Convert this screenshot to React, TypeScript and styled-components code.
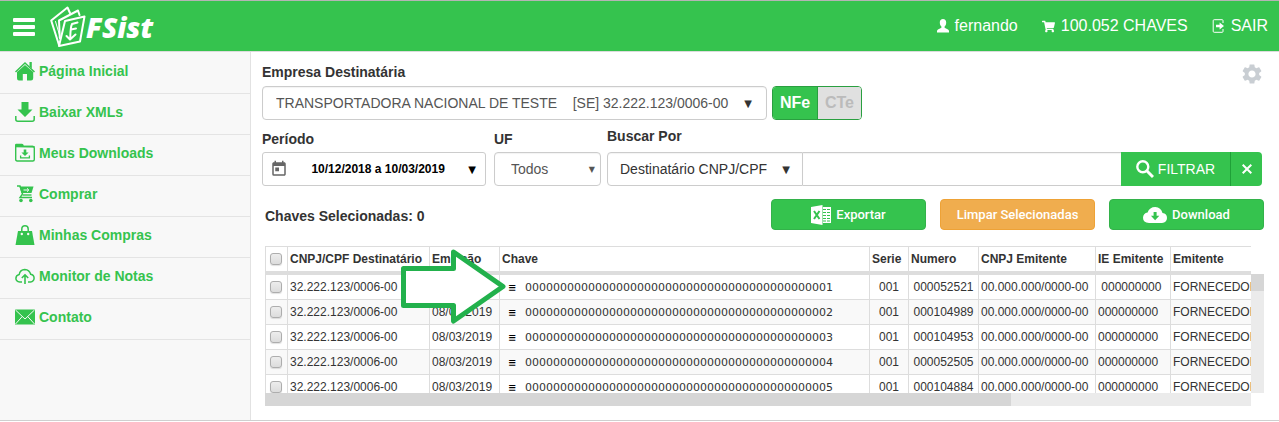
import React from 'react';
import styled, { createGlobalStyle } from 'styled-components';
import { MdSettings, MdToday } from 'react-icons/md';
import { FaShoppingCart } from 'react-icons/fa';

const green = '#35c34e';
const line = '#dddddd';

const GlobalStyle = createGlobalStyle`
  * { box-sizing: border-box; }
  body { margin: 0; background: #fff; }
  body, button, input, select { font-family: "Liberation Sans", Arial, sans-serif; }
  button { cursor: pointer; }
`;

const TopBar = styled.header`
  display: flex;
  align-items: center;
  height: 52px;
  padding: 0 11px 0 13px;
  background: ${green};
  border-top: 1px solid #b4b4b4;
  border-bottom: 1px solid #dcdcdc;
  color: #fff;
`;

const MenuButton = styled.button`
  display: flex;
  flex-direction: column;
  gap: 3px;
  width: 22px;
  padding: 2px 0 0;
  border: 0;
  background: none;
`;

const MenuBar = styled.span`
  height: 4px;
  border-radius: 1px;
  background: #fff;
`;

const Brand = styled.a`
  display: flex;
  align-items: center;
  margin-left: 15px;
  color: #fff;
  text-decoration: none;
  font: italic 800 28px/36px "Open Sans", sans-serif;
`;

const BrandName = styled.span`
  padding-top: 2px;
`;

const UserNav = styled.nav`
  display: flex;
  gap: 24px;
  margin-left: auto;
`;

const UserLink = styled.a`
  display: flex;
  align-items: center;
  gap: 6px;
  color: #fff;
  font-size: 16px;
  line-height: 20px;
  text-decoration: none;
`;

const Body = styled.div`
  display: flex;
  border-bottom: 1px solid #cfcfcf;
`;

const Sidebar = styled.nav`
  flex: none;
  width: 251px;
  padding-top: 1px;
  background: #f8f8f8;
  border-right: 1px solid #e2e2e2;
`;

const SideLink = styled.a`
  display: flex;
  align-items: center;
  gap: 4px;
  height: 41px;
  padding: 0 15px 4px;
  border-bottom: 1px solid #e4e4e4;
  color: ${green};
  font-size: 14px;
  font-weight: bold;
  text-decoration: none;
`;

const Main = styled.main`
  flex: 1;
  min-width: 0;
  padding: 10px 15px 14px 11px;
`;

const Row = styled.div`
  display: flex;
  align-items: flex-end;
`;

const CompanyRow = styled(Row)`
  gap: 5px;
`;

const FilterRow = styled(Row)`
  margin-top: 6px;
  padding-right: 2px;
`;

const Field = styled.div<{ $width?: number; $gap?: number }>`
  display: flex;
  flex-direction: column;
  flex: ${p => (p.$width ? `0 1 ${p.$width}px` : '1 1 0')};
  min-width: 0;
  margin-right: ${p => p.$gap ?? 0}px;
`;

const Label = styled.label<{ $space: number }>`
  color: #333;
  font-size: 14px;
  font-weight: bold;
  line-height: 20px;
  margin-bottom: ${p => p.$space}px;
`;

const SelectBox = styled.div<{ $joined?: boolean }>`
  display: grid;
  align-items: center;
  height: 34px;
  border: 1px solid #ccc;
  border-radius: ${p => (p.$joined ? '4px 0 0 4px' : '4px')};
  background: #fff;
  flex: ${p => (p.$joined ? '0 1 196px' : 'none')};
  box-shadow: inset 0 1px 1px rgba(0, 0, 0, 0.05);
`;

const Select = styled.select<{ $pad: number; $dark?: boolean }>`
  grid-area: 1 / 1;
  width: 100%;
  height: 32px;
  padding: 0 24px 0 ${p => p.$pad}px;
  border: 0;
  background: none;
  appearance: none;
  color: ${p => (p.$dark ? '#333' : '#555')};
  font-size: 14px;
`;

const Caret = styled.span<{ $right: number; $size?: number; $color?: string }>`
  grid-area: 1 / 1;
  justify-self: end;
  margin-right: ${p => p.$right}px;
  color: ${p => p.$color ?? '#333'};
  font-family: "DejaVu Sans", sans-serif;
  font-weight: normal;
  font-size: ${p => p.$size ?? 10}px;
  pointer-events: none;
`;

const PeriodButton = styled.button`
  display: flex;
  align-items: center;
  justify-content: space-between;
  height: 34px;
  padding: 0 8px 0 7px;
  border: 1px solid #ccc;
  border-radius: 3px;
  background: #fff;
  color: #000;
  font-size: 12px;
  font-weight: bold;
`;

const Toggle = styled.div`
  display: flex;
  height: 34px;
  overflow: hidden;
  border: 1px solid #2a9f40;
  border-radius: 4px;
`;

const ToggleButton = styled.button<{ $on?: boolean }>`
  width: ${p => (p.$on ? 45 : 43)}px;
  padding: 0 0 1px;
  border: 0;
  border-right: ${p => (p.$on ? '1px solid #2a9f40' : '0')};
  background: ${p => (p.$on ? green : '#e0e0e0')};
  color: ${p => (p.$on ? '#fff' : '#bbb')};
  font-size: 16px;
  font-weight: bold;
`;

const GearButton = styled.button`
  display: flex;
  align-self: flex-start;
  margin-left: auto;
  padding: 0;
  border: 0;
  background: none;
  color: #c9ced3;
`;

const SearchGroup = styled.div`
  display: flex;
`;

const SearchInput = styled.input`
  flex: 1;
  min-width: 0;
  height: 34px;
  padding: 0 8px;
  border: 1px solid #ccc;
  border-width: 1px 0;
  box-shadow: inset 0 1px 1px rgba(0, 0, 0, 0.05);
`;

const SearchButton = styled.button<{ $width: number; $last?: boolean }>`
  display: flex;
  align-items: center;
  justify-content: center;
  gap: 4px;
  flex: 0 0 ${p => p.$width}px;
  height: 34px;
  padding: 0;
  border: 0;
  border-left: ${p => (p.$last ? '1px solid #1fa038' : '0')};
  border-radius: ${p => (p.$last ? '0 4px 4px 0' : '0')};
  background: ${green};
  color: #fff;
  font-size: 14px;
`;

const Actions = styled(Row)`
  align-items: center;
  gap: 14px;
  margin-top: 13px;
  padding-left: 3px;
`;

const Selected = styled.strong`
  margin-right: auto;
  padding-top: 2px;
  color: #333;
  font-size: 14px;
`;

const ActionButton = styled.button<{ $warn?: boolean }>`
  display: flex;
  align-items: center;
  justify-content: center;
  gap: 5px;
  width: 155px;
  height: 31px;
  padding: 0;
  border: 1px solid ${p => (p.$warn ? '#eea236' : '#33b24a')};
  border-radius: 4px;
  background: ${p => (p.$warn ? '#f0ad4e' : green)};
  color: #fff;
  font-family: Roboto, "Liberation Sans", sans-serif;
  font-size: 13px;
  font-weight: 500;
`;

const GridArea = styled.section`
  position: relative;
  display: grid;
  grid-template-columns: minmax(0, 1fr) 13px;
  margin: 16px 0 0 3px;
`;

const Viewport = styled.div`
  height: 147px;
  overflow: hidden;
`;

const Table = styled.table`
  width: 1100px;
  table-layout: fixed;
  border-collapse: separate;
  border-spacing: 0;
  color: #333;
  font-size: 12px;
`;

const Th = styled.th`
  height: 29px;
  padding: 0 2px;
  border-top: 1px solid ${line};
  border-left: 1px solid ${line};
  border-bottom: 4px solid ${line};
  text-align: left;
  white-space: nowrap;
`;

const Tr = styled.tr`
  &:nth-child(even) { background: #f9f9f9; }
`;

const Td = styled.td<{ $center?: boolean }>`
  height: 25px;
  padding: 0 2px;
  border-left: 1px solid ${line};
  border-bottom: 1px solid ${line};
  text-align: ${p => (p.$center ? 'center' : 'left')};
  white-space: nowrap;
`;

const Key = styled.span`
  display: flex;
  align-items: center;
  gap: 9px;
  padding-left: 6px;
  font-family: "DejaVu Sans", Verdana, sans-serif;
  font-size: 11px;
`;

const RowMenu = styled.button`
  width: 8px;
  padding: 0;
  border: 0;
  background: none;
  color: #000;
  font: bold 10px "DejaVu Sans", sans-serif;
`;

const Check = styled.input`
  display: block;
  width: 12px;
  height: 12px;
  margin: 0 0 0 2px;
  appearance: none;
  border: 1px solid #adadad;
  border-radius: 3px;
  background: linear-gradient(#ededed, #dcdcdc);
  box-shadow: 0 1px 1px rgba(0, 0, 0, 0.12);
`;

const ScrollY = styled.div`
  margin-top: 28px;
  background: #ebebeb;
`;

const ScrollX = styled.div`
  height: 13px;
  background: #ebebeb;
`;

const Thumb = styled.div<{ $axis: 'x' | 'y' }>`
  width: ${p => (p.$axis === 'x' ? '75.7%' : '100%')};
  height: ${p => (p.$axis === 'y' ? '17px' : '100%')};
  background: #d6d6d6;
`;

const Pointer = styled.svg`
  position: absolute;
  left: 134px;
  top: 0;
  pointer-events: none;
`;

const Logo = () => (
  <svg width="36" height="42" viewBox="0 0 36 42" fill="none" stroke="#fff" strokeWidth="2" strokeLinejoin="round" strokeLinecap="round" aria-hidden="true">
    <path d="M9 40L1.200 15.500L17.500 2.500L20 8" />
    <path d="M9.800 33L9 15.500L28 5.500L29.500 10" />
    <path d="M15 16L34.500 11.500L30 36.500L9 41Z" />
    <path d="M5.500 16.500L9.500 30" strokeWidth="1" />
    <path d="M27.500 17.500L22 19Q20.500 22 20.300 32M21 24.500L26 23.500M16.500 31L20 34.500L25.500 29.500" />
  </svg>
);

const UserIcon = () => (
  <svg width="12" height="14" viewBox="0 0 12 14" fill="currentColor" aria-hidden="true">
    <path d="M6 0C8 0 9.2 1.4 9.2 3.6C9.2 5.4 8.5 6.8 7.6 7.6V8.8L11 10.4Q12 11 12 12V13.6H0V12Q0 11 1 10.4L4.4 8.8V7.6C3.5 6.8 2.8 5.4 2.8 3.6C2.8 1.4 4 0 6 0Z" />
  </svg>
);

const ExitIcon = () => (
  <svg width="13" height="14" viewBox="0 0 13 14" aria-hidden="true">
    <path d="M11 4V1.5Q11 .7 10 .7H2.2Q1.2 .7 1.2 1.7V12.3Q1.2 13.3 2.2 13.3H10Q11 13.3 11 12.5V10" fill="none" stroke="currentColor" />
    <path d="M4 5.7H7.6V3.6L12 7L7.6 10.4V8.3H4Z" fill="currentColor" />
  </svg>
);

const SearchIcon = () => (
  <svg width="18" height="20" viewBox="0 0 18 20" fill="none" stroke="currentColor" aria-hidden="true">
    <circle cx="6.800" cy="7.800" r="5.500" strokeWidth="2.400" />
    <path d="M10.800 11.800L17 18" strokeWidth="3" />
  </svg>
);

const sideIcons: Record<string, React.ReactNode> = {
  home: (
    <>
      <path d="M10 4L2 11V17.200Q2 19.500 4 19.500H7.800V13H12V19.500H16Q18.200 19.500 18.200 17.200V11Z" fill="currentColor" />
      <path d="M.5 11L10 2L19.500 11" fill="none" stroke="currentColor" strokeWidth="1.500" />
      <path d="M14.500 1H16.800V7.500L14.500 5.500Z" fill="currentColor" />
    </>
  ),
  download: (
    <>
      <path d="M6.500 0H13.500V7.500H17.500L10 15L2.500 7.500H6.500Z" fill="currentColor" />
      <path d="M.8 14V17.200Q.8 19.200 2.800 19.200H17.200Q19.200 19.200 19.200 17.200V14" fill="none" stroke="currentColor" strokeWidth="1.500" />
    </>
  ),
  folder: (
    <>
      <path d="M0 4V2Q0 .8 1.300 .8H7Q8.500 .8 8.800 2.800H18Q20 2.800 20 4.500Z" fill="currentColor" />
      <path d="M.7 3.500H17.500Q19.300 3.500 19.300 5V16.500Q19.300 18 17.800 18H2.200Q.7 18 .7 16.500Z" fill="none" stroke="currentColor" strokeWidth="1.400" />
      <path d="M8.700 6.500H11.300V9.500H13.600L10 13L6.400 9.500H8.700Z" fill="currentColor" />
      <path d="M5.600 12.500V14.800H14.400V12.500" fill="none" stroke="currentColor" strokeWidth="1.300" />
    </>
  ),
  cart: (
    <>
      <path d="M2 2H5L7.500 10L5 13.500H17" fill="none" stroke="currentColor" strokeWidth="1.400" />
      <path d="M4.500 2.500H18.500L16.500 9H6.500Z" fill="currentColor" />
      <path d="M7.500 11H16.500" stroke="currentColor" strokeWidth="1.400" />
      <path d="M8.500 6H13.500M12 4.300L13.800 6L12 7.700" stroke="#f8f8f8" fill="none" />
      <circle cx="6" cy="16.500" r="1.800" fill="currentColor" />
      <circle cx="15.800" cy="16.500" r="1.800" fill="currentColor" />
    </>
  ),
  bag: (
    <>
      <path d="M3 6H17L19.500 20H.5Z" fill="currentColor" />
      <path d="M6.800 7V4Q6.800 .8 10 .8T13.200 4V7" fill="none" stroke="currentColor" strokeWidth="1.500" />
      <circle cx="6.800" cy="9" r="1.200" fill="#f8f8f8" />
      <circle cx="13.200" cy="9" r="1.200" fill="#f8f8f8" />
    </>
  ),
  cloud: (
    <>
      <path d="M7 16H4.800Q.9 15.600 .9 12.300Q1 9.300 4.200 8.500Q5 3.600 9.800 3.400Q14.500 3.600 15.700 8.300Q19.100 9 19.100 12.300Q18.900 15.600 15.500 16H13" fill="none" stroke="currentColor" strokeWidth="1.500" />
      <path d="M10 18V9.500M6.800 12L10 8.800L13.200 12" fill="none" stroke="currentColor" strokeWidth="1.600" />
    </>
  ),
  mail: (
    <>
      <path d="M0 2.500H20V17.500H0Z" fill="currentColor" />
      <path d="M.5 3L10 12L19.500 3M.5 17L7.300 9.500M19.500 17L12.700 9.500" fill="none" stroke="#f8f8f8" />
    </>
  ),
};

const ExcelIcon = () => (
  <svg width="20" height="20" viewBox="0 0 20 20" aria-hidden="true">
    <path d="M0 2L11.500 0V20L0 18Z" fill="#fff" />
    <path d="M12 2H20V18H12Z" fill="#fff" />
    <path d="M12 4.500H19M12 7.500H19M12 10.500H19M12 13.500H19M12 16H19" stroke={green} strokeWidth="1.200" />
    <path d="M15.500 4V17" stroke="#fff" />
    <path d="M3 6L8.500 14M8.500 6L3 14" stroke={green} strokeWidth="2" />
  </svg>
);

const CloudIcon = () => (
  <svg width="24" height="16" viewBox="0 0 24 16" aria-hidden="true">
    <path d="M6 16Q0 15.700 0 10.700Q.2 6.300 4.600 5.500Q6.500 0 12.300 0Q18 .3 19.500 6Q24 6.600 24 11Q23.800 15.700 19 16Z" fill="#fff" />
    <path d="M10.600 5H13.600V8.800H16.300L12.100 13.300L7.900 8.800H10.600Z" fill={green} />
  </svg>
);

const menu = [
  ['home', 'Página Inicial'],
  ['download', 'Baixar XMLs'],
  ['folder', 'Meus Downloads'],
  ['cart', 'Comprar'],
  ['bag', 'Minhas Compras'],
  ['cloud', 'Monitor de Notas'],
  ['mail', 'Contato'],
];

const columns: [string, number?][] = [
  ['CNPJ/CPF Destinatário', 142],
  ['Emissão', 70],
  ['Chave', 370],
  ['Serie', 39],
  ['Numero', 70],
  ['CNPJ Emitente', 117],
  ['IE Emitente', 75],
  ['Emitente'],
];

const rows = [
  { numero: '000052521', ie: '\u00a0000000000' },
  { numero: '000104989', ie: '000000000' },
  { numero: '000104953', ie: '000000000' },
  { numero: '000052505', ie: '000000000' },
  { numero: '000104884', ie: '000000000' },
];

export default function App() {
  return (
    <>
      <GlobalStyle />
      <TopBar>
        <MenuButton aria-label="Menu">
          <MenuBar />
          <MenuBar />
          <MenuBar />
        </MenuButton>
        <Brand href="#">
          <Logo />
          <BrandName>FSist</BrandName>
        </Brand>
        <UserNav>
          <UserLink href="#"><UserIcon /> fernando</UserLink>
          <UserLink href="#"><FaShoppingCart size={13} /> 100.052 CHAVES</UserLink>
          <UserLink href="#"><ExitIcon /> SAIR</UserLink>
        </UserNav>
      </TopBar>
      <Body>
        <Sidebar>
          {menu.map(([icon, text]) => (
            <SideLink href="#" key={icon}>
              <svg width="20" height="20" viewBox="0 0 20 20" aria-hidden="true">{sideIcons[icon]}</svg>
              {text}
            </SideLink>
          ))}
        </Sidebar>
        <Main>
          <CompanyRow>
            <Field $width={505}>
              <Label htmlFor="empresa" $space={4}>Empresa Destinatária</Label>
              <SelectBox>
                <Select id="empresa" $pad={13}>
                  <option>{'TRANSPORTADORA NACIONAL DE TESTE\u00a0\u00a0\u00a0 [SE] 32.222.123/0006-00'}</option>
                </Select>
                <Caret $right={14}>▼</Caret>
              </SelectBox>
            </Field>
            <Toggle>
              <ToggleButton $on aria-pressed="true">NFe</ToggleButton>
              <ToggleButton aria-pressed="false">CTe</ToggleButton>
            </Toggle>
            <GearButton aria-label="Configurações"><MdSettings size={24} /></GearButton>
          </CompanyRow>
          <FilterRow>
            <Field $width={224} $gap={8}>
              <Label htmlFor="periodo" $space={3}>Período</Label>
              <PeriodButton id="periodo">
                <MdToday size={18} color="#666" />
                10/12/2018 a 10/03/2019
                <Caret $right={1} $color="#000">▼</Caret>
              </PeriodButton>
            </Field>
            <Field $width={107} $gap={6}>
              <Label htmlFor="uf" $space={3}>UF</Label>
              <SelectBox>
                <Select id="uf" $pad={16}>
                  <option>Todos</option>
                </Select>
                <Caret $right={5} $size={8} $color="#555">▼</Caret>
              </SelectBox>
            </Field>
            <Field>
              <Label htmlFor="busca" $space={6}>Buscar Por</Label>
              <SearchGroup>
                <SelectBox $joined>
                  <Select aria-label="Campo de busca" $pad={12} $dark>
                    <option>Destinatário CNPJ/CPF</option>
                  </Select>
                  <Caret $right={12}>▼</Caret>
                </SelectBox>
                <SearchInput id="busca" />
                <SearchButton $width={109}>
                  <SearchIcon />
                  FILTRAR
                </SearchButton>
                <SearchButton $width={32} $last aria-label="Limpar filtro">
                  <svg width="10" height="10" viewBox="0 0 10 10" aria-hidden="true">
                    <path d="M.7 .7L9.300 9.300M9.300 .7L.7 9.300" stroke="#fff" strokeWidth="2" />
                  </svg>
                </SearchButton>
              </SearchGroup>
            </Field>
          </FilterRow>
          <Actions>
            <Selected>Chaves Selecionadas: 0</Selected>
            <ActionButton><ExcelIcon />Exportar</ActionButton>
            <ActionButton $warn>Limpar Selecionadas</ActionButton>
            <ActionButton><CloudIcon />Download</ActionButton>
          </Actions>
          <GridArea>
            <Viewport>
              <Table>
                <colgroup>
                  <col width={22} />
                  {columns.map(([name, width]) => <col key={name} width={width} />)}
                </colgroup>
                <thead>
                  <tr>
                    <Th><Check type="checkbox" aria-label="Selecionar todas" /></Th>
                    {columns.map(([name]) => <Th key={name}>{name}</Th>)}
                  </tr>
                </thead>
                <tbody>
                  {rows.map((row, i) => (
                    <Tr key={row.numero}>
                      <Td><Check type="checkbox" aria-label={`Selecionar ${row.numero}`} /></Td>
                      <Td>32.222.123/0006-00</Td>
                      <Td>08/03/2019</Td>
                      <Td>
                        <Key>
                          <RowMenu>≡</RowMenu>
                          {String(i + 1).padStart(44, '0')}
                        </Key>
                      </Td>
                      <Td $center>001</Td>
                      <Td $center>{row.numero}</Td>
                      <Td>00.000.000/0000-00</Td>
                      <Td>{row.ie}</Td>
                      <Td>FORNECEDOR</Td>
                    </Tr>
                  ))}
                </tbody>
              </Table>
            </Viewport>
            <ScrollY><Thumb $axis="y" /></ScrollY>
            <ScrollX><Thumb $axis="x" /></ScrollX>
            <Pointer width="110" height="82" viewBox="0 0 110 82" aria-hidden="true">
              <path d="M4.500 22.500H54.500V6L104 40.500L54.500 75V59.500H4.500Z" fill="#fff" stroke="#22b14c" strokeWidth="5" strokeLinejoin="round" />
            </Pointer>
          </GridArea>
        </Main>
      </Body>
    </>
  );
}
